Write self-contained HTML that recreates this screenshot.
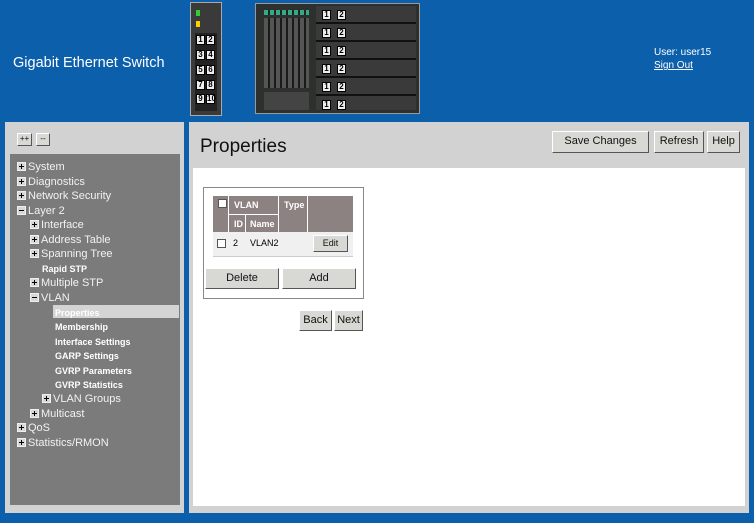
<!DOCTYPE html>
<html><head><meta charset="utf-8"><style>
*{margin:0;padding:0;box-sizing:border-box}
body{width:754px;height:523px;background:#0b5fab;font-family:"Liberation Sans",sans-serif;position:relative;overflow:hidden}
.a{position:absolute}
.title{left:13px;top:55px;color:#fff;font-size:14.5px}
.user{left:654px;top:46px;color:#fff;font-size:10px;line-height:13px}
.user u{color:#fff}
.lp{left:5px;top:122px;width:179px;height:391px;background:#d2d2d2}
.tree{left:10px;top:154px;width:170px;height:351px;background:#7b7b7b}
.rp{left:189px;top:122px;width:560px;height:391px;background:#d2d2d2}
.wc{left:193px;top:168px;width:552px;height:338px;background:#fff}
.btn{position:absolute;background:#d8d8d4;border:1px solid;border-color:#fff #555 #555 #fff;font-size:11px;color:#111;text-align:center}
.it{position:absolute;color:#f2f2f2;font-size:11px;line-height:12px;white-space:nowrap}
.ic{display:inline-block;width:9px;height:9px;background:#d8d8d8;border:1px solid #eee;position:relative;vertical-align:-1px;margin-right:2px}
.ic:before{content:"";position:absolute;left:1px;top:3px;width:5px;height:1px;background:#000}
.ic.p:after{content:"";position:absolute;left:3px;top:1px;width:1px;height:5px;background:#000}
.b{font-weight:bold;font-size:9px;color:#fff}
.num{position:absolute;width:9px;height:10px;background:#eee;border:1px solid #000;font-size:8px;line-height:8px;text-align:center;color:#000;font-weight:bold}
</style></head><body>
<div class="a title">Gigabit Ethernet Switch</div>
<div class="a user">User: user15<br><u>Sign Out</u></div>

<div class="a" style="left:190px;top:2px;width:32px;height:114px;background:#3a3a3a;border:1px solid #aaa"></div>
<div class="a" style="left:196px;top:10px;width:4px;height:6px;background:#3c3"></div>
<div class="a" style="left:196px;top:21px;width:4px;height:6px;background:#fc0"></div>
<div class="a" style="left:195px;top:33px;width:22px;height:78px;background:#222"></div>
<div class="num" style="left:196px;top:35px">1</div><div class="num" style="left:206px;top:35px">2</div>
<div class="num" style="left:196px;top:50px">3</div><div class="num" style="left:206px;top:50px">4</div>
<div class="num" style="left:196px;top:65px">5</div><div class="num" style="left:206px;top:65px">6</div>
<div class="num" style="left:196px;top:80px">7</div><div class="num" style="left:206px;top:80px">8</div>
<div class="num" style="left:196px;top:94px">9</div><div class="num" style="left:206px;top:94px">10</div>
<div class="a" style="left:255px;top:3px;width:165px;height:111px;background:#2e302e;border:1px solid #999"></div>
<div class="a" style="left:264px;top:10px;width:45px;height:5px;background:repeating-linear-gradient(90deg,#3a8 0 4px,#222 4px 6px)"></div>
<div class="a" style="left:264px;top:18px;width:45px;height:70px;background:repeating-linear-gradient(90deg,#555 0 4px,#1a1a1a 4px 6px)"></div>
<div class="a" style="left:264px;top:92px;width:45px;height:18px;background:#444"></div>
<div class="a" style="left:316px;top:6px;width:100px;height:104px;background:repeating-linear-gradient(180deg,#3a3a3a 0 16px,#111 16px 18px)"></div>
<div class="num" style="left:322px;top:10px">1</div><div class="num" style="left:337px;top:10px">2</div>
<div class="num" style="left:322px;top:28px">1</div><div class="num" style="left:337px;top:28px">2</div>
<div class="num" style="left:322px;top:46px">1</div><div class="num" style="left:337px;top:46px">2</div>
<div class="num" style="left:322px;top:64px">1</div><div class="num" style="left:337px;top:64px">2</div>
<div class="num" style="left:322px;top:82px">1</div><div class="num" style="left:337px;top:82px">2</div>
<div class="num" style="left:322px;top:100px">1</div><div class="num" style="left:337px;top:100px">2</div>

<div class="a lp"></div>
<div class="btn" style="left:17px;top:133px;width:15px;height:13px;font-size:8px;line-height:10px">++</div>
<div class="btn" style="left:36px;top:133px;width:14px;height:13px;font-size:8px;line-height:10px">--</div>
<div class="a tree"></div>
<div class="it" style="left:17px;top:161px"><span class="ic p"></span>System</div>
<div class="it" style="left:17px;top:176px"><span class="ic p"></span>Diagnostics</div>
<div class="it" style="left:17px;top:190px"><span class="ic p"></span>Network Security</div>
<div class="it" style="left:17px;top:205px"><span class="ic"></span>Layer 2</div>
<div class="it" style="left:30px;top:219px"><span class="ic p"></span>Interface</div>
<div class="it" style="left:30px;top:234px"><span class="ic p"></span>Address Table</div>
<div class="it" style="left:30px;top:248px"><span class="ic p"></span>Spanning Tree</div>
<div class="it b" style="left:42px;top:263px">Rapid STP</div>
<div class="it" style="left:30px;top:277px"><span class="ic p"></span>Multiple STP</div>
<div class="it" style="left:30px;top:292px"><span class="ic"></span>VLAN</div>
<div class="a" style="left:53px;top:305px;width:126px;height:13px;background:#d4d4d4"></div>
<div class="it b" style="left:55px;top:307px">Properties</div>
<div class="it b" style="left:55px;top:321px">Membership</div>
<div class="it b" style="left:55px;top:336px">Interface Settings</div>
<div class="it b" style="left:55px;top:350px">GARP Settings</div>
<div class="it b" style="left:55px;top:365px">GVRP Parameters</div>
<div class="it b" style="left:55px;top:379px">GVRP Statistics</div>
<div class="it" style="left:42px;top:393px"><span class="ic p"></span>VLAN Groups</div>
<div class="it" style="left:30px;top:408px"><span class="ic p"></span>Multicast</div>
<div class="it" style="left:17px;top:422px"><span class="ic p"></span>QoS</div>
<div class="it" style="left:17px;top:437px"><span class="ic p"></span>Statistics/RMON</div>

<div class="a rp"></div>
<div class="a" style="left:200px;top:136px;font-size:19px;color:#111">Properties</div>
<div class="btn" style="left:552px;top:131px;width:97px;height:22px;line-height:19px">Save Changes</div>
<div class="btn" style="left:654px;top:131px;width:50px;height:22px;line-height:19px">Refresh</div>
<div class="btn" style="left:707px;top:131px;width:33px;height:22px;line-height:19px">Help</div>
<div class="a wc"></div>

<div class="a" style="left:203px;top:187px;width:161px;height:112px;border:1px solid #888;background:#fff"></div>
<div class="a" style="left:213px;top:196px;width:140px;height:36px;background:#8d8282"></div>
<div class="a" style="left:213px;top:232px;width:140px;height:25px;background:#f0f0f0;border-bottom:1px solid #ccc"></div>
<div class="a" style="left:228px;top:196px;width:1px;height:36px;background:#fff"></div>
<div class="a" style="left:278px;top:196px;width:1px;height:36px;background:#fff"></div>
<div class="a" style="left:307px;top:196px;width:1px;height:36px;background:#fff"></div>
<div class="a" style="left:229px;top:214px;width:49px;height:1px;background:#fff"></div>
<div class="a" style="left:245px;top:215px;width:1px;height:17px;background:#fff"></div>
<div class="a" style="left:218px;top:199px;width:9px;height:9px;background:#fff;border:1px solid #555"></div>
<div class="a b" style="left:234px;top:200px;font-size:9px">VLAN</div>
<div class="a b" style="left:284px;top:200px;font-size:9px">Type</div>
<div class="a b" style="left:234px;top:219px;font-size:9px">ID</div>
<div class="a b" style="left:250px;top:219px;font-size:9px">Name</div>
<div class="a" style="left:217px;top:239px;width:9px;height:9px;background:#fff;border:1px solid #555"></div>
<div class="a" style="left:233px;top:238px;font-size:9px">2</div>
<div class="a" style="left:250px;top:238px;font-size:9px">VLAN2</div>
<div class="btn" style="left:313px;top:235px;width:35px;height:17px;font-size:9px;line-height:15px">Edit</div>
<div class="btn" style="left:205px;top:268px;width:74px;height:21px;line-height:19px">Delete</div>
<div class="btn" style="left:282px;top:268px;width:74px;height:21px;line-height:19px">Add</div>
<div class="btn" style="left:299px;top:310px;width:33px;height:21px;line-height:19px">Back</div>
<div class="btn" style="left:334px;top:310px;width:29px;height:21px;line-height:19px">Next</div>
</body></html>
